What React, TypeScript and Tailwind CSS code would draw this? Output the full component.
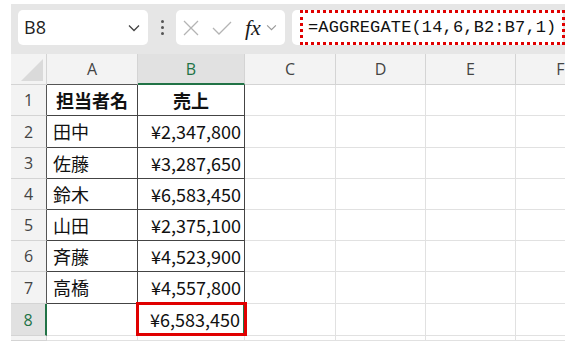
import React from "react";

const cols = [
  { key: "A", w: 91 },
  { key: "B", w: 107 },
  { key: "C", w: 91 },
  { key: "D", w: 90 },
  { key: "E", w: 90 },
  { key: "F", w: 90 },
];

const rowHeights = [31, 32, 31, 31, 31, 31, 32, 32];

const data: [string, string][] = [
  ["担当者名", "売上"],
  ["田中", "¥2,347,800"],
  ["佐藤", "¥3,287,650"],
  ["鈴木", "¥6,583,450"],
  ["山田", "¥2,375,100"],
  ["斉藤", "¥4,523,900"],
  ["高橋", "¥4,557,800"],
  ["", "¥6,583,450"],
];

const cellFont = { fontFamily: '"Noto Sans CJK JP", "Noto Sans", sans-serif' };
const uiFont = { fontFamily: '"Open Sans", "Noto Sans", sans-serif' };

const Chevron = ({ className }: { className: string }) => (
  <svg className={className} viewBox="0 0 12 8" fill="none" stroke="currentColor" strokeWidth={1.3}>
    <path d="M1 1.5l5 5 5-5" />
  </svg>
);

const Toolbar = () => (
  <div className="flex h-[50px] items-start pt-[6px]">
    {/* Name box */}
    <div className="ml-[7px] flex h-[35px] w-[130px] shrink-0 items-center justify-between rounded-[5px] bg-white pl-[6px] pr-[8px]">
      <span className="text-[18px] text-[#222]" style={uiFont}>B8</span>
      <Chevron className="h-[8px] w-[12px] text-[#444]" />
    </div>
    <div className="flex h-[35px] w-[28px] shrink-0 flex-col items-center justify-center gap-[3px]">
      <span className="h-[3px] w-[3px] rounded-full bg-[#555]" />
      <span className="h-[3px] w-[3px] rounded-full bg-[#555]" />
      <span className="h-[3px] w-[3px] rounded-full bg-[#555]" />
    </div>
    {/* Cancel / enter / fx */}
    <div className="flex h-[35px] w-[109px] shrink-0 items-center rounded-[5px] bg-white pl-[7px]">
      <svg className="h-[16px] w-[16px] text-[#b4b4b4]" viewBox="0 0 16 16" fill="none" stroke="currentColor" strokeWidth={1.3}>
        <path d="M1 1l14 14M15 1L1 15" />
      </svg>
      <svg className="ml-[13px] h-[14px] w-[20px] text-[#b4b4b4]" viewBox="0 0 20 14" fill="none" stroke="currentColor" strokeWidth={1.3}>
        <path d="M1 7l6 6L19 1" />
      </svg>
      <span className="ml-[13px] text-[22px] italic leading-none text-[#1a1a1a]" style={{ fontFamily: '"Liberation Serif", serif' }}>
        fx
      </span>
      <Chevron className="ml-[5px] h-[7px] w-[11px] text-[#999]" />
    </div>
    {/* Formula bar */}
    <div className="ml-[7px] flex h-[35px] w-[271px] shrink-0 items-center rounded-[5px] bg-white">
      <div className="ml-[8px] flex h-[35px] w-[265px] shrink-0 items-center border-[3px] border-dotted border-[#e00000] pl-[5px]">
        <span className="text-[17px] tracking-[0.15px] text-[#111]" style={{ fontFamily: '"Liberation Mono", monospace' }}>
          =AGGREGATE(14,6,B2:B7,1)
        </span>
      </div>
    </div>
  </div>
);

const Sheet = () => (
  <div className="overflow-hidden bg-white">
    {/* Column headers */}
    <div className="flex h-[31px]">
      <div className="relative w-[36px] shrink-0 border-r border-b border-[#d4d4d4] bg-[#f3f3f3]">
        <svg className="absolute bottom-[3px] right-[3px] h-[22px] w-[22px]" viewBox="0 0 22 22">
          <path d="M22 0L22 22L0 22Z" fill="#dadada" />
        </svg>
      </div>
      {cols.map((c) => {
        const sel = c.key === "B";
        const inTable = c.key === "A" || c.key === "B";
        return (
          <div
            key={c.key}
            className={`flex shrink-0 items-center justify-center border-r border-[#d4d4d4] text-[16px] ${
              sel
                ? "border-b-2 border-b-[#217346] bg-[#e1e1e1] text-[#217346]"
                : inTable
                ? "border-b border-b-[#555] bg-[#f3f3f3] text-[#444]"
                : "border-b border-b-[#d4d4d4] bg-[#f3f3f3] text-[#444]"
            }`}
            style={{ width: c.w, ...uiFont }}
          >
            {c.key}
          </div>
        );
      })}
    </div>
    {/* Rows */}
    {data.map((row, i) => {
      const n = i + 1;
      const selRow = n === 8;
      const inTable = n <= 7;
      return (
        <div key={n} className="flex" style={{ height: rowHeights[i] }}>
          <div
            className={`flex w-[36px] shrink-0 items-center justify-center border-b border-[#d4d4d4] text-[16px] ${
              selRow ? "border-r-2 border-r-[#217346] bg-[#e1e1e1] text-[#217346]" : "border-r border-r-[#555] bg-[#f3f3f3] text-[#444]"
            }`}
            style={uiFont}
          >
            {n}
          </div>
          {/* A */}
          <div
            className={`flex shrink-0 items-center border-r border-b text-[18px] text-[#111] ${
              inTable ? "border-[#444]" : "border-[#e1e1e1]"
            } ${n === 1 ? "justify-center font-bold" : "pl-[6px]"}`}
            style={{ width: cols[0].w, ...cellFont }}
          >
            {row[0]}
          </div>
          {/* B */}
          <div
            className={`relative flex shrink-0 items-center border-b text-[18px] text-[#111] ${
              inTable ? "border-r border-[#444]" : "border-r-2 border-r-[#217346] border-b-[#e1e1e1]"
            } ${n === 1 ? "justify-center font-bold" : "justify-end pr-[3px]"}`}
            style={{ width: cols[1].w, ...cellFont }}
          >
            {row[1]}
            {selRow && (
              <span className="absolute -left-[2px] -top-[2px] -bottom-[1px] -right-[4px] border-[3px] border-[#e00000]" />
            )}
          </div>
          {cols.slice(2).map((c) => (
            <div key={c.key} className="shrink-0 border-r border-b border-[#e1e1e1]" style={{ width: c.w }} />
          ))}
        </div>
      );
    })}
    {/* Partial next row */}
    <div className="flex h-[5px]">
      <div className="w-[36px] shrink-0 border-r border-b border-[#d4d4d4] bg-[#f3f3f3]" />
      {cols.map((c) => (
        <div key={c.key} className="shrink-0 border-r border-b border-[#e1e1e1]" style={{ width: c.w }} />
      ))}
    </div>
  </div>
);

export default function App() {
  return (
    <div className="h-[353px] w-[576px] bg-white pl-[11px] pt-[4px]">
      <div className="w-[554px] overflow-hidden bg-[#e6e6e6]">
        <Toolbar />
        <Sheet />
      </div>
    </div>
  );
}
